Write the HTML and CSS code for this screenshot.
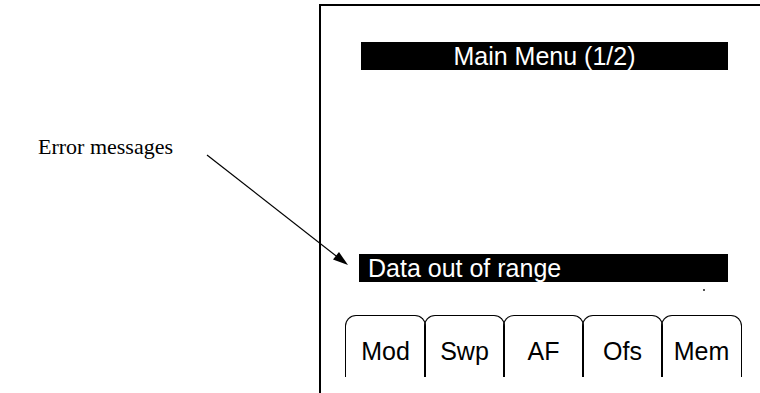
FILE: index.html
```html
<!DOCTYPE html>
<html lang="en">
<head>
  <meta charset="UTF-8" />
  <title>Main Menu</title>
  <link rel="stylesheet" href="styles.css">
</head>
<body>
  <div class="page">
    <div class="note">
      <span class="note-text">Error messages</span>
    </div>

    <div class="screen">
      <div class="title-bar">Main Menu (1/2)</div>
      <div class="error-bar">Data out of range</div>
      <span class="speck"></span>
      <div class="tabs">
        <div class="tab">Mod</div>
        <div class="tab">Swp</div>
        <div class="tab">AF</div>
        <div class="tab">Ofs</div>
        <div class="tab">Mem</div>
      </div>
    </div>

    <svg class="arrow" width="760" height="393" viewBox="0 0 760 393">
      <line x1="207" y1="155" x2="340" y2="259" stroke="#000" stroke-width="1.2" />
      <polygon points="348,265 333,259.5 339,252" fill="#000" />
    </svg>
  </div>
</body>
</html>
```

FILE: styles.css
```css
body {
  margin: 0;
  background: #fff;
  color: #000;
}
.page {
  position: relative;
  display: flex;
  width: 760px;
  height: 393px;
  overflow: hidden;
}
.note {
  width: 319px;
  flex-shrink: 0;
  padding-top: 134px;
  padding-left: 38px;
  box-sizing: border-box;
}
.note-text {
  font-family: "Liberation Serif", "Times New Roman", serif;
  font-size: 22px;
  line-height: 26px;
}
.screen {
  position: relative;
  flex: 1;
  margin-top: 4px;
  border-top: 2px solid #000;
  border-left: 2px solid #000;
  font-family: "Liberation Sans", Arial, sans-serif;
  font-size: 25px;
}
.title-bar {
  margin: 36px 0 0 40px;
  width: 367px;
  height: 28px;
  line-height: 28px;
  background: #000;
  color: #fff;
  text-align: center;
}
.error-bar {
  margin: 184px 0 0 38px;
  width: 369px;
  height: 28px;
  line-height: 28px;
  padding-left: 9px;
  box-sizing: border-box;
  background: #000;
  color: #fff;
}
.speck {
  position: absolute;
  left: 382px;
  top: 283px;
  width: 2px;
  height: 2px;
  background: #555;
}
.tabs {
  display: flex;
  margin: 33px 0 0 24px;
}
.tab {
  width: 81px;
  height: 62px;
  box-sizing: border-box;
  margin-right: -2px;
  padding-top: 21px;
  line-height: 28px;
  text-align: center;
  border: 1.5px solid #000;
  border-bottom: none;
  border-radius: 11px 11px 0 0;
}
.arrow {
  position: absolute;
  left: 0;
  top: 0;
  pointer-events: none;
}
```
